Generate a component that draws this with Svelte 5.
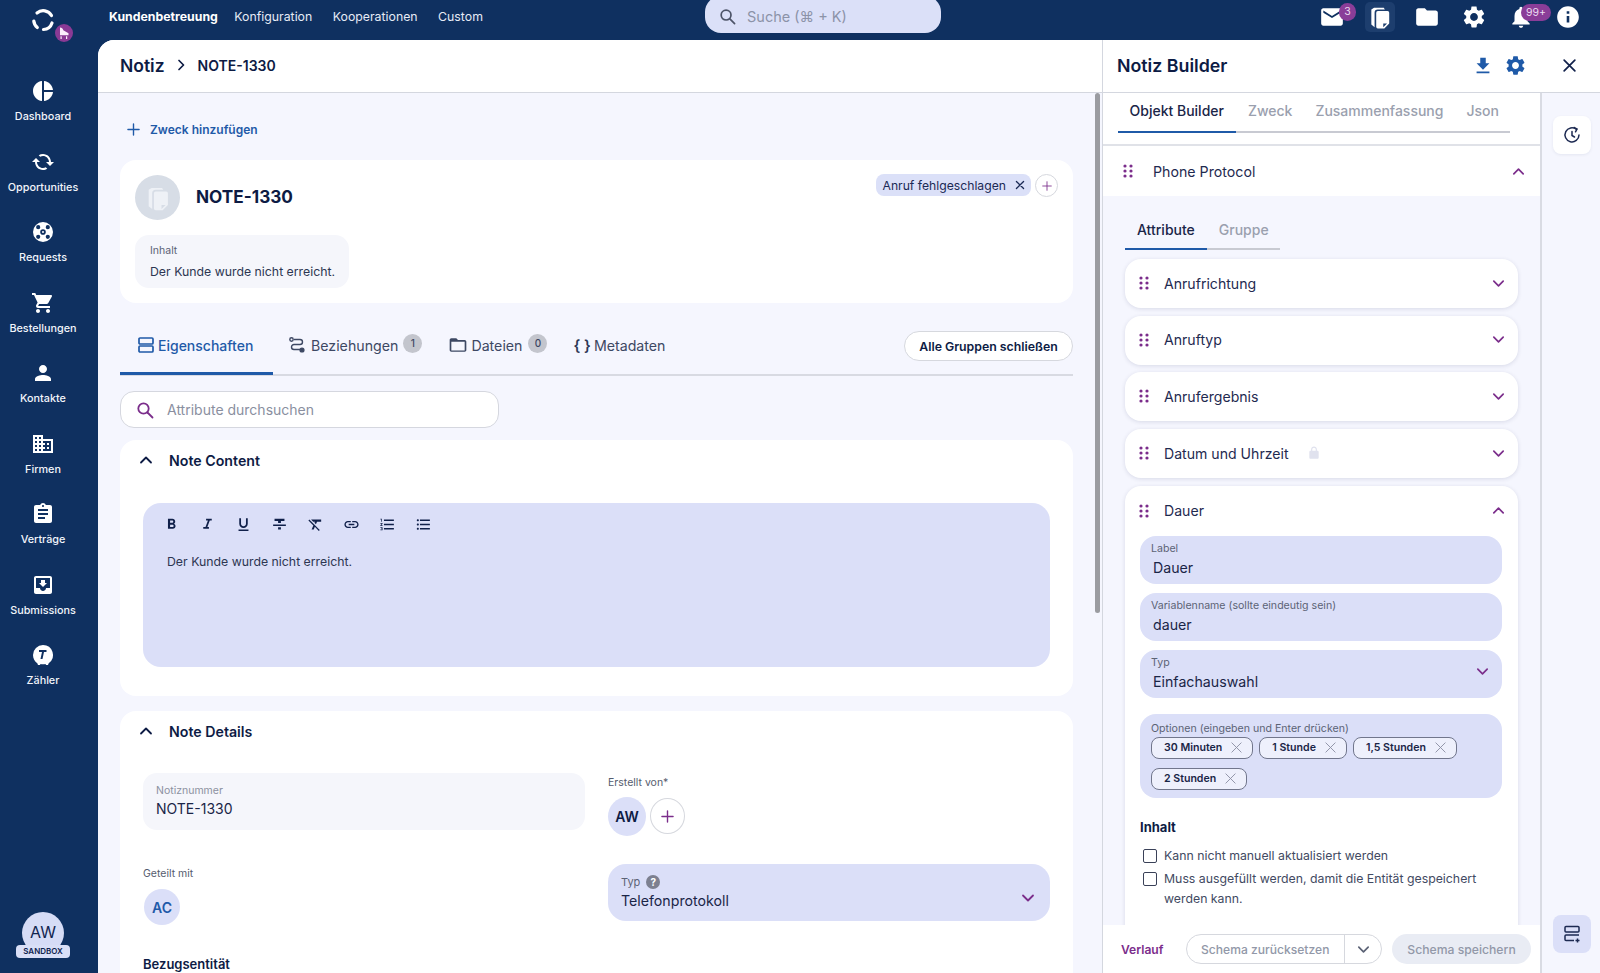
<script>
  const paths = {
    pie: "M11 2v20c-5-.5-9-4.8-9-10s4-9.5 9-10zm2 0v9h9c-.5-4.8-4.2-8.5-9-9zm0 11v9c4.8-.5 8.5-4.2 9-9h-9z",
    sync: "M12 4V1L8 5l4 4V6c3.31 0 6 2.69 6 6 0 1.01-.25 1.97-.7 2.8l1.46 1.46C19.54 15.03 20 13.57 20 12c0-4.42-3.58-8-8-8zm0 14c-3.31 0-6-2.69-6-6 0-1.01.25-1.97.7-2.8L5.24 7.74C4.46 8.97 4 10.43 4 12c0 4.42 3.58 8 8 8v3l4-4-4-4v3z",
    buoy: "M12 2a10 10 0 1 0 0 20 10 10 0 0 0 0-20zM9.2 12a2.8 2.8 0 1 0 5.6 0 2.8 2.8 0 1 0-5.6 0zM11 12a1 1 0 1 0 2 0 1 1 0 1 0-2 0zM5.1 7.2a2.1 2.1 0 1 0 4.2 0 2.1 2.1 0 1 0-4.2 0zM14.7 7.2a2.1 2.1 0 1 0 4.2 0 2.1 2.1 0 1 0-4.2 0zM5.1 16.8a2.1 2.1 0 1 0 4.2 0 2.1 2.1 0 1 0-4.2 0zM14.7 16.8a2.1 2.1 0 1 0 4.2 0 2.1 2.1 0 1 0-4.2 0z",
    cart: "M7 18c-1.1 0-1.99.9-1.99 2S5.9 22 7 22s2-.9 2-2-.9-2-2-2zM1 2v2h2l3.6 7.59-1.35 2.45c-.16.28-.25.61-.25.96 0 1.1.9 2 2 2h12v-2H7.42c-.14 0-.25-.11-.25-.25l.03-.12.9-1.63h7.45c.75 0 1.41-.41 1.75-1.03l3.58-6.49c.08-.14.12-.31.12-.48 0-.55-.45-1-1-1H5.21l-.94-2H1zm16 16c-1.1 0-1.99.9-1.99 2s.89 2 1.99 2 2-.9 2-2-.9-2-2-2z",
    person: "M12 12c2.21 0 4-1.79 4-4s-1.79-4-4-4-4 1.79-4 4 1.79 4 4 4zm0 2c-2.67 0-8 1.34-8 4v2h16v-2c0-2.66-5.33-4-8-4z",
    business: "M12 7V3H2v18h20V7H12zM6 19H4v-2h2v2zm0-4H4v-2h2v2zm0-4H4V9h2v2zm0-4H4V5h2v2zm4 12H8v-2h2v2zm0-4H8v-2h2v2zm0-4H8V9h2v2zm0-4H8V5h2v2zm10 12h-8v-2h2v-2h-2v-2h2v-2h-2V9h8v10zm-2-8h-2v2h2v-2zm0 4h-2v2h2v-2z",
    assign: "M19 3h-4.18C14.4 1.84 13.3 1 12 1c-1.3 0-2.4.84-2.82 2H5c-1.1 0-2 .9-2 2v14c0 1.1.9 2 2 2h14c1.1 0 2-.9 2-2V5c0-1.1-.9-2-2-2zm-7 0c.55 0 1 .45 1 1s-.45 1-1 1-1-.45-1-1 .45-1 1-1zm2 14H7v-2h7v2zm3-4H7v-2h10v2zm0-4H7V7h10v2z",
    inbox: "M19 3H5c-1.11 0-2 .9-2 2v14c0 1.1.89 2 2 2h14c1.1 0 2-.9 2-2V5c0-1.1-.9-2-2-2zm0 12h-4c0 1.66-1.35 3-3 3s-3-1.34-3-3H5V5h14v10zm-3-5h-2V7h-4v3H8l4 4 4-4z",
    meter: "M12 2a10 10 0 0 0-10 10c0 3.4 1.7 6.4 4.3 8.2L7 22h2l.5-1c.8.2 1.6.3 2.5.3s1.7-.1 2.5-.3l.5 1h2l.7-1.8A10 10 0 0 0 12 2zm3.5 7H13l-1.5 7h-2L11 9H8V7h7.5v2z",
    mail: "M20 4H4c-1.1 0-2 .9-2 2v12c0 1.1.9 2 2 2h16c1.1 0 2-.9 2-2V6c0-1.1-.9-2-2-2zm0 4l-8 5-8-5V6l8 5 8-5v2z",
    notes: "M6.5 3.5 4 5v14l3 2.5V8a3 3 0 0 1 3-3h6.5l-1-1.5zM10 6.5A1.5 1.5 0 0 0 8.5 8v13a1.5 1.5 0 0 0 1.5 1.5h6l4.5-4.5V8A1.5 1.5 0 0 0 19 6.5zm5 11.5h3.5L15 21.5z",
    folder: "M10 4H4c-1.1 0-1.99.9-1.99 2L2 18c0 1.1.9 2 2 2h16c1.1 0 2-.9 2-2V8c0-1.1-.9-2-2-2h-8l-2-2z",
    folderOutline: "M20 6h-8l-2-2H4c-1.1 0-2 .9-2 2v12c0 1.1.9 2 2 2h16c1.1 0 2-.9 2-2V8c0-1.1-.9-2-2-2zm0 12.5H4V8h16z",
    gear: "M19.14 12.94c.04-.3.06-.61.06-.94 0-.32-.02-.64-.07-.94l2.03-1.58c.18-.14.23-.41.12-.61l-1.92-3.32c-.12-.22-.37-.29-.59-.22l-2.39.96c-.5-.38-1.03-.7-1.62-.94l-.36-2.54c-.04-.24-.24-.41-.48-.41h-3.84c-.24 0-.43.17-.47.41l-.36 2.54c-.59.24-1.13.57-1.62.94l-2.39-.96c-.22-.08-.47 0-.59.22L2.74 8.87c-.12.21-.08.47.12.61l2.03 1.58c-.05.3-.09.63-.09.94s.02.64.07.94l-2.03 1.58c-.18.14-.23.41-.12.61l1.92 3.32c.12.22.37.29.59.22l2.39-.96c.5.38 1.03.7 1.62.94l.36 2.54c.05.24.24.41.48.41h3.84c.24 0 .44-.17.47-.41l.36-2.54c.59-.24 1.13-.56 1.62-.94l2.39.96c.22.08.47 0 .59-.22l1.92-3.32c.12-.22.07-.47-.12-.61l-2.01-1.58zM12 15.6c-1.98 0-3.6-1.62-3.6-3.6s1.62-3.6 3.6-3.6 3.6 1.62 3.6 3.6-1.62 3.6-3.6 3.6z",
    bell: "M12 22c1.1 0 2-.9 2-2h-4c0 1.1.89 2 2 2zm6-6v-5c0-3.07-1.64-5.64-4.5-6.32V4c0-.83-.67-1.5-1.5-1.5s-1.5.67-1.5 1.5v.68C7.63 5.36 6 7.92 6 11v5l-2 2v1h16v-1l-2-2z",
    info: "M12 2C6.48 2 2 6.48 2 12s4.48 10 10 10 10-4.48 10-10S17.52 2 12 2zm1.2 15h-2.4v-6h2.4v6zm0-8h-2.4V6.800h2.4V9z",
    download: "M19 9h-4V3H9v6H5l7 7 7-7zM5 18v2h14v-2H5z",
    bold: "M15.6 10.79c.97-.67 1.65-1.77 1.65-2.79 0-2.26-1.75-4-4-4H7v14h7.04c2.09 0 3.71-1.7 3.71-3.79 0-1.52-.86-2.82-2.15-3.42zM10 6.5h3c.83 0 1.5.67 1.5 1.5s-.67 1.5-1.5 1.5h-3v-3zm3.5 9H10v-3h3.5c.83 0 1.5.67 1.5 1.5s-.67 1.5-1.5 1.5z",
    italic: "M10 4v2.5h2.6L9.2 15.5H6V18h8v-2.5h-2.2l3.4-9H18V4z",
    underline: "M12 17c3.31 0 6-2.69 6-6V3h-2.5v8c0 1.93-1.57 3.5-3.5 3.5S8.5 12.93 8.5 11V3H6v8c0 3.31 2.69 6 6 6zm-7 2v2h14v-2H5z",
    strike: "M10 19h4v-3h-4v3zM5 4v3h5v3h4V7h5V4H5zM3 14h18v-2H3v2z",
    clear: "M3.27 5L2 6.27l6.97 6.97L6.5 19h3l1.57-3.66L16.73 21 18 19.73 3.55 5.27 3.27 5zM6 5v.18L8.82 8h2.4l-.72 1.68 2.1 2.1L14.21 8H20V5H6z",
    link: "M3.9 12c0-1.71 1.39-3.1 3.1-3.1h4V7H7c-2.76 0-5 2.24-5 5s2.24 5 5 5h4v-1.9H7c-1.71 0-3.1-1.39-3.1-3.1zM8 13h8v-2H8v2zm9-6h-4v1.9h4c1.71 0 3.1 1.39 3.1 3.1s-1.39 3.1-3.1 3.1h-4V17h4c2.76 0 5-2.24 5-5s-2.24-5-5-5z",
    ol: "M2 17h2v.5H3v1h1v.5H2v1h3v-4H2v1zm1-9h1V4H2v1h1v3zm-1 3h1.8L2 13.1v.9h3v-1H3.2L5 10.9V10H2v1zm5-6v2h14V5H7zm0 14h14v-2H7v2zm0-6h14v-2H7v2z",
    ul: "M4 10.5c-.83 0-1.5.67-1.5 1.5s.67 1.5 1.5 1.5 1.5-.67 1.5-1.5-.67-1.5-1.5-1.5zm0-6c-.83 0-1.5.67-1.5 1.5S3.17 7.5 4 7.5 5.5 6.83 5.5 6 4.83 4.5 4 4.5zm0 12c-.83 0-1.5.68-1.5 1.5s.68 1.5 1.5 1.5 1.5-.68 1.5-1.5-.67-1.5-1.5-1.5zM7 19h14v-2H7v2zm0-6h14v-2H7v2zm0-8v2h14V5H7z",
    lock: "M18 8h-1V6c0-2.76-2.24-5-5-5S7 3.24 7 6v2H6c-1.1 0-2 .9-2 2v10c0 1.1.9 2 2 2h12c1.1 0 2-.9 2-2V10c0-1.1-.9-2-2-2zM9 6c0-1.66 1.34-3 3-3s3 1.34 3 3v2H9V6z"
  };

  const navItems = [
    ["pie", "Dashboard"],
    ["sync", "Opportunities"],
    ["buoy", "Requests"],
    ["cart", "Bestellungen"],
    ["person", "Kontakte"],
    ["business", "Firmen"],
    ["assign", "Verträge"],
    ["inbox", "Submissions"],
    ["meter", "Zähler"]
  ];

  const toolbar = ["bold", "italic", "underline", "strike", "clear", "link", "ol", "ul"];
  const attributes = ["Anrufrichtung", "Anruftyp", "Anrufergebnis", "Datum und Uhrzeit"];
  const options = ["30 Minuten", "1 Stunde", "1,5 Stunden", "2 Stunden"];
</script>

{#snippet icon(name, size = 24)}
  <svg class="icon {name}" width={size} height={size} viewBox="0 0 24 24" fill="currentColor" fill-rule="evenodd"><path d={paths[name]} /></svg>
{/snippet}

{#snippet chevron(up = false, size = 16)}
  <svg class="icon chev" width={size} height={size} viewBox="0 0 16 16" fill="none" stroke="currentColor" stroke-width="1.8" stroke-linecap="round" stroke-linejoin="round">
    <path d={up ? "M3 10.5l5-5 5 5" : "M3 5.5l5 5 5-5"} />
  </svg>
{/snippet}

{#snippet cross(size = 14, width = 1.6)}
  <svg class="icon" width={size} height={size} viewBox="0 0 14 14" fill="none" stroke="currentColor" stroke-width={width} stroke-linecap="round">
    <path d="M2 2l10 10M12 2L2 12" />
  </svg>
{/snippet}

{#snippet plus(size = 14, width = 1.6)}
  <svg class="icon" width={size} height={size} viewBox="0 0 14 14" fill="none" stroke="currentColor" stroke-width={width} stroke-linecap="round">
    <path d="M7 1v12M1 7h12" />
  </svg>
{/snippet}

{#snippet grip()}
  <svg class="icon grip" width="10" height="14" viewBox="0 0 10 14" fill="currentColor">
    <circle cx="2" cy="2" r="1.6" /><circle cx="8" cy="2" r="1.6" />
    <circle cx="2" cy="7" r="1.6" /><circle cx="8" cy="7" r="1.6" />
    <circle cx="2" cy="12" r="1.6" /><circle cx="8" cy="12" r="1.6" />
  </svg>
{/snippet}

{#snippet searchGlass(size = 18)}
  <svg class="icon" width={size} height={size} viewBox="0 0 18 18" fill="none" stroke="currentColor" stroke-width="1.8" stroke-linecap="round">
    <circle cx="7.5" cy="7.5" r="5.2" /><path d="M11.5 11.5l5 5" />
  </svg>
{/snippet}

<div class="app">
  <aside class="sidebar">
    <div class="logo">
      <svg width="28" height="28" viewBox="0 0 28 28" fill="none" stroke="#fff" stroke-width="3.2" stroke-linecap="round">
        <path d="M4.8 15a9.5 9.5 0 0 0 3.500 6.500" />
        <path d="M8 7a9.500 9.500 0 0 1 14.500 2.500" />
        <path d="M23 17a9.500 9.500 0 0 1-8.500 6.500" />
      </svg>
      <span class="logo-badge">
        <svg width="14" height="14" viewBox="0 0 14 14" fill="#fbeffc"><path d="M3 1.500c1.800 0 2.800 1 3.300 2.800l5.200 3v2H3zM3.500 10.200h1.200V13H3.500zM9 10.200h1.200V13H9z" /></svg>
      </span>
    </div>
    <nav class="nav">
      {#each navItems as [name, label]}
        <div class="nav-item">
          {@render icon(name, 24)}
          <span>{label}</span>
        </div>
      {/each}
    </nav>
    <div class="user">
      <div class="user-circle">AW</div>
      <div class="sandbox">SANDBOX</div>
    </div>
  </aside>

  <div class="content">
    <header class="topbar">
      <div class="menu">
        <a class="strong" href="#top">Kundenbetreuung</a>
        <a href="#top">Konfiguration</a>
        <a href="#top">Kooperationen</a>
        <a href="#top">Custom</a>
      </div>
      <div class="global-search">
        {@render searchGlass(17)}
        <span>Suche (⌘ + K)</span>
      </div>
      <div class="top-icons">
        <span class="top-icon mail">{@render icon("mail", 26)}<b class="badge">3</b></span>
        <span class="top-icon tile">{@render icon("notes", 26)}</span>
        <span class="top-icon">{@render icon("folder", 26)}</span>
        <span class="top-icon">{@render icon("gear", 26)}</span>
        <span class="top-icon">{@render icon("bell", 26)}<b class="badge wide">99+</b></span>
        <span class="top-icon">{@render icon("info", 26)}</span>
      </div>
    </header>

    <div class="workspace">
      <main class="main">
        <div class="page-head">
          <h1>Notiz</h1>
          <svg class="crumb" width="10" height="12" viewBox="0 0 10 12" fill="none" stroke="currentColor" stroke-width="1.7" stroke-linecap="round" stroke-linejoin="round"><path d="M3 1.5 7.5 6 3 10.5" /></svg>
          <span>NOTE-1330</span>
        </div>
        <div class="scrollbar"></div>
        <div class="main-body">
          <div class="add-purpose">{@render plus(13, 1.5)}<span>Zweck hinzufügen</span></div>

          <section class="card summary">
            <div class="summary-head">
              <div class="note-avatar">{@render icon("notes", 28)}</div>
              <h2>NOTE-1330</h2>
              <div class="tag">Anruf fehlgeschlagen {@render cross(10, 1.8)}</div>
              <div class="round-plus small">{@render plus(10, 1.2)}</div>
            </div>
            <div class="inhalt">
              <small>Inhalt</small>
              <p>Der Kunde wurde nicht erreicht.</p>
            </div>
          </section>

          <div class="tabs">
            <div class="tab active">
              <svg width="18" height="18" viewBox="0 0 18 18" fill="none" stroke="currentColor" stroke-width="1.7"><rect x="2" y="2" width="14" height="6" rx="1" /><rect x="2" y="10" width="14" height="6" rx="1" /></svg>
              Eigenschaften
            </div>
            <div class="tab">
              <svg width="18" height="18" viewBox="0 0 18 18" fill="none" stroke="currentColor" stroke-width="1.4"><circle cx="3.5" cy="3.5" r="1.7" /><path d="M6 3.5h6a2.5 2.5 0 0 1 0 5H6a2.5 2.5 0 0 0 0 5h6" /><circle cx="14" cy="14" r="1.9" fill="currentColor" /></svg>
              Beziehungen <b class="count">1</b>
            </div>
            <div class="tab tight">
              {@render icon("folderOutline", 20)}
              Dateien <b class="count">0</b>
            </div>
            <div class="tab tight"><b class="braces">{"{ }"}</b> Metadaten</div>
            <button class="close-groups">Alle Gruppen schließen</button>
          </div>

          <div class="attr-search">
            {@render searchGlass(18)}
            <span>Attribute durchsuchen</span>
          </div>

          <section class="card content-card">
            <div class="card-head">{@render chevron(true, 16)}<h3>Note Content</h3></div>
            <div class="editor">
              <div class="toolbar">
                {#each toolbar as tool}
                  {@render icon(tool, 17)}
                {/each}
              </div>
              <p>Der Kunde wurde nicht erreicht.</p>
            </div>
          </section>

          <section class="card details-card">
            <div class="card-head">{@render chevron(true, 16)}<h3>Note Details</h3></div>
            <div class="details-grid">
              <div class="readonly">
                <small>Notiznummer</small>
                <span>NOTE-1330</span>
              </div>
              <div class="people first">
                <span class="people-label">Erstellt von*</span>
                <div class="people-row">
                  <div class="person-circle aw">AW</div>
                  <div class="round-plus">{@render plus(13, 1.5)}</div>
                </div>
              </div>
              <div class="people second">
                <span class="people-label">Geteilt mit</span>
                <div class="people-row"><div class="person-circle ac">AC</div></div>
              </div>
              <div class="type-select">
                <div>
                  <small>Typ <i class="help">?</i></small>
                  <span>Telefonprotokoll</span>
                </div>
                {@render chevron(false, 16)}
              </div>
            </div>
            <h4>Bezugsentität</h4>
          </section>
        </div>
      </main>

      <section class="builder">
        <div class="builder-head">
          <h2>Notiz Builder</h2>
          <span class="blue">{@render icon("download", 22)}</span>
          <span class="blue gear-btn">{@render icon("gear", 23)}</span>
          <span class="close">{@render cross(15, 1.6)}</span>
        </div>
        <div class="builder-body">
          <div class="builder-main">
            <div class="builder-scroll">
              <div class="builder-tabs">
                <span class="on">Objekt Builder</span>
                <span>Zweck</span>
                <span>Zusammenfassung</span>
                <span>Json</span>
              </div>
              <div class="protocol-row">
                {@render grip()}
                <span>Phone Protocol</span>
                {@render chevron(true, 15)}
              </div>
              <div class="protocol-body">
                <div class="sub-tabs">
                  <span class="on">Attribute</span>
                  <span>Gruppe</span>
                </div>
                {#each attributes as attr}
                  <div class="attr-card">
                    <div class="attr-row">
                      {@render grip()}
                      <span class="attr-name">{attr}</span>
                      {#if attr === "Datum und Uhrzeit"}
                        <span class="lock">{@render icon("lock", 14)}</span>
                      {/if}
                      {@render chevron(false, 15)}
                    </div>
                  </div>
                {/each}
                <div class="attr-card open">
                  <div class="attr-row">
                    {@render grip()}
                    <span class="attr-name">Dauer</span>
                    {@render chevron(true, 15)}
                  </div>
                  <div class="field"><small>Label</small><span>Dauer</span></div>
                  <div class="field"><small>Variablenname (sollte eindeutig sein)</small><span>dauer</span></div>
                  <div class="field with-arrow">
                    <div><small>Typ</small><span>Einfachauswahl</span></div>
                    {@render chevron(false, 15)}
                  </div>
                  <div class="field options">
                    <small>Optionen (eingeben und Enter drücken)</small>
                    <div class="chips">
                      {#each options as option}
                        <div class="chip">{option} {@render cross(13, 1)}</div>
                      {/each}
                    </div>
                  </div>
                  <h4>Inhalt</h4>
                  <div class="check"><i></i><span>Kann nicht manuell aktualisiert werden</span></div>
                  <div class="check"><i></i><span>Muss ausgefüllt werden, damit die Entität gespeichert werden kann.</span></div>
                </div>
              </div>
            </div>
            <footer class="builder-foot">
              <a href="#top">Verlauf</a>
              <div class="split">
                <span>Schema zurücksetzen</span>
                <span class="split-arrow">{@render chevron(false, 15)}</span>
              </div>
              <button class="save">Schema speichern</button>
            </footer>
          </div>
          <div class="rail">
            <div class="rail-btn">
              <svg width="18" height="18" viewBox="0 0 18 18" fill="none" stroke="currentColor" stroke-width="1.5" stroke-linecap="round"><path d="M13.5 3.5A7 7 0 1 0 16 9" /><path d="M9 5.5V9.5l2.500 1.500M11 1.500l3 1.500-1.500 2.800" /></svg>
            </div>
            <div class="rail-btn tinted">
              <svg width="20" height="20" viewBox="0 0 20 20" fill="none" stroke="currentColor" stroke-width="1.5"><rect x="3" y="2.5" width="14" height="5.5" rx="1" /><path d="M17 11H4a1 1 0 0 0-1 1v3.500a1 1 0 0 0 1 1h8M15.500 14.500v4M13.500 16.500h4" /></svg>
            </div>
          </div>
        </div>
      </section>
    </div>
  </div>
</div>

<style>
  :global(body) {
    margin: 0;
    background: #0f3060;
  }

  .app {
    display: flex;
    width: 1600px;
    height: 973px;
    overflow: hidden;
    background: #0f3060;
    font-family: Inter, "Noto Sans", sans-serif;
    color: #0d1b44;
  }

  .icon {
    display: block;
    flex: none;
  }

  h1, h2, h3, h4, p {
    margin: 0;
  }

  /* sidebar */
  .sidebar {
    width: 98px;
    flex: none;
    display: flex;
    flex-direction: column;
    color: #fff;
    padding-right: 12px;
    box-sizing: border-box;
  }

  .logo {
    height: 79px;
    position: relative;
    display: flex;
    justify-content: center;
    padding-top: 6px;
    box-sizing: border-box;
  }

  .logo-badge {
    position: absolute;
    left: 55px;
    top: 24px;
    width: 18px;
    height: 18px;
    border-radius: 50%;
    background: #8a3a95;
    display: flex;
    align-items: center;
    justify-content: center;
  }

  .nav {
    flex: 1;
  }

  .nav-item {
    height: 70.5px;
    display: flex;
    flex-direction: column;
    align-items: center;
  }

  .nav-item :global(.sync) {
    transform: scaleX(-1) rotate(-90deg);
  }

  .nav-item span {
    margin-top: 6px;
    font-size: 10.8px;
    line-height: 16px;
    font-weight: 500;
    color: #f2f5fb;
  }

  .user {
    display: flex;
    flex-direction: column;
    align-items: center;
    margin-bottom: 15px;
  }

  .user-circle {
    width: 42px;
    height: 42px;
    border-radius: 50%;
    background: #d6dcf6;
    color: #10244f;
    font-size: 16px;
    text-align: center;
    line-height: 40px;
  }

  .sandbox {
    margin-top: -9px;
    width: 54px;
    height: 13px;
    line-height: 13px;
    border-radius: 4px;
    background: #d9dff7;
    color: #10244f;
    font-size: 8px;
    font-weight: 600;
    text-align: center;
  }

  /* top bar */
  .content {
    flex: 1;
    min-width: 0;
    display: flex;
    flex-direction: column;
  }

  .topbar {
    height: 40px;
    flex: none;
    display: flex;
    align-items: center;
    overflow: hidden;
  }

  .menu {
    display: flex;
    padding-left: 11px;
    gap: 20.5px;
    font-size: 12.3px;
    width: 607px;
    height: 34px;
    flex: none;
    align-items: center;
    box-sizing: border-box;
    margin-top: -7px;
  }

  .menu a {
    color: #e6ebf6;
    text-decoration: none;
  }

  .menu a.strong {
    color: #fff;
    font-weight: 700;
    margin-right: -4px;
  }

  .global-search {
    width: 236px;
    height: 37px;
    flex: none;
    margin-top: -11px;
    box-sizing: border-box;
    padding: 4px 0 0 14px;
    border-radius: 16px;
    background: #dbe0f8;
    display: flex;
    align-items: center;
    gap: 11px;
    color: #4d5468;
    font-size: 14.5px;
  }

  .global-search span {
    color: #8c93a8;
  }

  .top-icons {
    flex: 1;
    display: flex;
    align-items: center;
    height: 40px;
    color: #fff;
    padding-left: 375px;
    gap: 17px;
  }

  .top-icon {
    position: relative;
    display: flex;
    align-items: center;
    justify-content: center;
    height: 30px;
    margin-top: -7px;
    width: 30px;
    flex: none;
  }

  .top-icon.mail {
    width: 32px;
  }

  .top-icon.tile {
    border-radius: 5px;
    background: #1d3e6e;
  }

  .badge {
    position: absolute;
    left: 23px;
    top: 1px;
    min-width: 17px;
    height: 18px;
    border-radius: 9px;
    background: #8a3d98;
    color: #eadcf0;
    font-size: 10.5px;
    font-weight: 400;
    line-height: 18px;
    text-align: center;
  }

  .badge.wide {
    left: 15px;
    top: 2px;
    min-width: 30px;
    height: 17px;
    line-height: 17px;
  }

  /* main column */
  .workspace {
    flex: 1;
    display: flex;
    min-height: 0;
  }

  .main {
    width: 1004px;
    flex: none;
    background: #f5f6fe;
    border-top-left-radius: 16px;
    display: flex;
    flex-direction: column;
    position: relative;
    overflow: hidden;
  }

  .page-head {
    height: 52px;
    flex: none;
    box-sizing: border-box;
    height: 53px;
    padding: 0 0 2px 22px;
    background: #fff;
    border-bottom: 1px solid #d4d7df;
    display: flex;
    align-items: center;
    font-size: 14px;
    font-weight: 600;
  }

  .page-head h1 {
    font-size: 17.5px;
    font-weight: 600;
  }

  .crumb {
    margin: 0 12px 0 11px;
  }

  .scrollbar {
    position: absolute;
    right: 2px;
    top: 53px;
    width: 5px;
    height: 520px;
    border-radius: 3px;
    background: #9b9ca1;
  }

  .main-body {
    padding: 24px 29px 0 22px;
  }

  .add-purpose {
    display: flex;
    align-items: center;
    height: 24px;
    padding-left: 7px;
    gap: 10px;
    color: #1f5aa8;
    font-size: 12px;
    font-weight: 600;
    margin-bottom: 19px;
  }

  .card {
    background: #fff;
    border-radius: 16px;
  }

  .summary {
    padding: 15px;
    height: 143px;
    box-sizing: border-box;
  }

  .summary-head {
    display: flex;
    height: 45px;
  }

  .note-avatar {
    width: 45px;
    height: 45px;
    border-radius: 50%;
    background: #d7dde6;
    color: #eef1f6;
    display: flex;
    align-items: center;
    justify-content: center;
  }

  .summary-head h2 {
    margin-left: 16px;
    flex: 1;
    font-size: 17.2px;
    line-height: 43px;
    font-weight: 700;
  }

  .tag {
    height: 22px;
    padding: 0 6px;
    display: flex;
    align-items: center;
    gap: 9px;
    border-radius: 8px;
    background: #dbe0f8;
    font-size: 12.2px;
    color: #1b2a55;
    margin-top: -1px;
  }

  .round-plus {
    width: 35px;
    height: 36px;
    margin-top: 1px;
    border-radius: 50%;
    border: 1px solid #d6d8de;
    background: #fff;
    color: #7b2d8b;
    display: flex;
    align-items: center;
    justify-content: center;
    box-sizing: border-box;
  }

  .round-plus.small {
    width: 23px;
    height: 23px;
    margin-left: 4px;
    margin-top: -1px;
  }

  .inhalt {
    margin-top: 15px;
    width: 214px;
    height: 53px;
    box-sizing: border-box;
    padding: 9px 15px;
    border-radius: 14px;
    background: #f5f6fb;
  }

  .inhalt small {
    display: block;
    font-size: 10.5px;
    line-height: 14px;
    color: #5c6375;
  }

  .inhalt p {
    margin-top: 6px;
    font-size: 12.3px;
    line-height: 16px;
    white-space: nowrap;
    color: #2d3652;
  }

  /* tabs */
  .tabs {
    margin-top: 28px;
    height: 45px;
    box-sizing: border-box;
    display: flex;
    align-items: flex-start;
    border-bottom: 2px solid #d8dae2;
    font-size: 14.2px;
    color: #3d4863;
  }

  .tab {
    display: flex;
    align-items: center;
    gap: 5px;
    height: 28px;
    margin-right: 26px;
  }

  .tab.tight {
    gap: 3px;
  }

  .tab.tight .count {
    margin-left: 3px;
  }

  .tab.active {
    width: 153px;
    height: 44px;
    padding: 1px 0 14px 17px;
    box-sizing: border-box;
    margin-right: 15px;
    gap: 3px;
    font-size: 14px;
    color: #1f5aa8;
    font-weight: 500;
    border-bottom: 3px solid #1f5aa8;
    flex: none;
  }

  .count {
    width: 19px;
    height: 19px;
    border-radius: 50%;
    background: #c3c5cd;
    font-size: 10px;
    line-height: 19px;
    font-weight: 500;
    text-align: center;
    color: #3d4863;
    margin-top: -3px;
  }

  .braces {
    font-weight: 600;
    font-size: 15px;
    color: #2c3655;
  }

  .close-groups {
    margin-left: auto;
    width: 169px;
    height: 30px;
    border: 1px solid #d6d8de;
    border-radius: 15px;
    background: #fff;
    color: #0d1b44;
    font: 600 12.3px Inter, sans-serif;
    padding: 0;
  }

  .attr-search {
    margin-top: 15px;
    width: 379px;
    height: 37px;
    box-sizing: border-box;
    padding-left: 15px;
    display: flex;
    align-items: center;
    gap: 13px;
    border: 1px solid #d5d7df;
    border-radius: 14px;
    background: #fff;
    color: #7b2d8b;
  }

  .attr-search span {
    color: #8a8f9f;
    font-size: 14px;
  }

  .card-head {
    height: 40px;
    display: flex;
    align-items: center;
    padding-left: 18px;
    gap: 15px;
    color: #0d1b44;
  }

  .card-head h3 {
    font-size: 14.2px;
    font-weight: 600;
  }

  .content-card {
    margin-top: 12px;
    height: 256px;
    padding: 0 23px;
    box-sizing: border-box;
  }

  .content-card .card-head {
    margin-left: -23px;
  }

  .editor {
    margin-top: 23px;
    height: 164px;
    border-radius: 18px;
    background: #dbdff8;
    padding: 13px 0 0 24px;
    box-sizing: border-box;
    font-size: 12.3px;
    color: #2d3652;
  }

  .toolbar {
    display: flex;
    gap: 19px;
    height: 18px;
    margin-left: -4px;
    color: #10204a;
  }

  .editor p {
    margin-top: 20px;
    line-height: 16px;
  }

  .details-card {
    margin-top: 15px;
    padding: 0 23px;
    height: 300px;
  }

  .details-card .card-head {
    margin-left: -23px;
  }

  .details-grid {
    margin-top: 22px;
    display: grid;
    grid-template-columns: 442px 442px;
    column-gap: 23px;
    row-gap: 28px;
    align-items: start;
  }

  .readonly {
    height: 57px;
    box-sizing: border-box;
    padding: 11px 13px;
    border-radius: 14px;
    background: #f5f6fb;
  }

  .readonly small, .type-select small {
    display: block;
    font-size: 10.5px;
    line-height: 14px;
    color: #8c91a0;
  }

  .readonly span {
    display: block;
    margin-top: 2px;
    font-size: 14px;
    line-height: 18px;
    color: #1a2547;
  }

  .people {
    padding-top: 3px;
  }

  .people-label {
    display: block;
    font-size: 10.5px;
    line-height: 14px;
    color: #555c6e;
  }

  .people-row {
    display: flex;
    gap: 4px;
    margin-top: 7px;
  }

  .people.second .people-row {
    margin-top: 8px;
    padding-left: 1px;
  }

  .person-circle {
    width: 38px;
    height: 39px;
    border-radius: 50%;
    background: #dbdff8;
    font-size: 14px;
    font-weight: 600;
    display: flex;
    align-items: center;
    justify-content: center;
  }

  .person-circle.ac {
    width: 36px;
    height: 36px;
    color: #1f5aa8;
  }

  .type-select {
    height: 57px;
    box-sizing: border-box;
    padding: 11px 14px 0 13px;
    display: flex;
    justify-content: space-between;
    align-items: center;
    border-radius: 18px;
    background: #dbdff8;
    color: #7b2d8b;
  }

  .type-select > div {
    flex: 1;
    align-self: flex-start;
  }

  .type-select small {
    display: flex;
    align-items: center;
    gap: 6px;
    color: #5c6375;
    font-size: 11px;
  }

  .type-select span {
    display: block;
    margin-top: 3px;
    font-size: 14.2px;
    line-height: 18px;
    color: #1a2547;
  }

  .help {
    width: 14px;
    height: 14px;
    border-radius: 50%;
    background: #7d8090;
    color: #fff;
    font: 700 10px/14px Inter, sans-serif;
    text-align: center;
  }

  .details-card h4 {
    margin-top: 31px;
    font-size: 13px;
    line-height: 16px;
    font-weight: 600;
  }

  /* builder */
  .builder {
    flex: 1;
    min-width: 0;
    display: flex;
    flex-direction: column;
    background: #f5f6fe;
    border-left: 1px solid #d4d7df;
    box-sizing: border-box;
  }

  .builder-head {
    height: 53px;
    box-sizing: border-box;
    flex: none;
    background: #fff;
    border-bottom: 1px solid #d4d7df;
    display: flex;
    align-items: center;
    padding: 0 23px 1px 14px;
    color: #1f5aa8;
  }

  .builder-head h2 {
    flex: 1;
    font-size: 17.8px;
    font-weight: 600;
    color: #0d1b44;
  }

  .gear-btn {
    margin: 0 35px 0 10px;
  }

  .close {
    color: #10204a;
  }

  .builder-body {
    flex: 1;
    min-height: 0;
    display: flex;
  }

  .builder-main {
    width: 439px;
    flex: none;
    box-sizing: border-box;
    border-right: 2px solid #d9dbe3;
    display: flex;
    flex-direction: column;
    background: #fff;
  }

  .builder-scroll {
    flex: 1;
    min-height: 0;
    overflow: hidden;
  }

  .builder-tabs {
    height: 53px;
    border-bottom: 2px solid #e0e2e8;
    display: flex;
    padding: 0 15px;
    box-sizing: border-box;
    font-size: 14px;
    font-weight: 500;
    color: #9aa0ae;
  }

  .builder-tabs span {
    height: 40px;
    line-height: 36px;
    box-sizing: border-box;
    padding: 0 11.5px;
    border-bottom: 2px solid #c8cad2;
    white-space: nowrap;
  }

  .builder-tabs span.on {
    padding-right: 12.5px;
    color: #1a2547;
    border-bottom-color: #1f5aa8;
  }

  .protocol-row {
    height: 50px;
    display: flex;
    align-items: center;
    padding: 0 14px 0 20px;
    font-size: 14.2px;
    color: #1f2a50;
  }

  .protocol-row span {
    flex: 1;
    margin-left: 20px;
  }

  .grip {
    color: #7b2d8b;
  }

  .protocol-row > :global(.chev), .attr-row > :global(.chev), .with-arrow > :global(.chev) {
    color: #7b2d8b;
  }

  .protocol-body {
    background: #f5f6fe;
    padding: 20px 22px 0 22px;
    min-height: 800px;
  }

  .sub-tabs {
    display: flex;
    width: 155px;
    height: 34px;
    box-sizing: border-box;
    border-bottom: 2px solid #c8cad2;
    font-size: 14px;
    font-weight: 500;
    color: #9aa0ae;
    margin-bottom: 9px;
  }

  .sub-tabs span {
    padding: 5px 12px 0;
    height: 34px;
    box-sizing: border-box;
  }

  .sub-tabs .on {
    color: #1a2547;
    border-bottom: 2px solid #1f5aa8;
  }

  .attr-card {
    background: #fff;
    border-radius: 16px;
    box-shadow: 0 1px 4px rgba(40, 50, 90, 0.14);
    margin-bottom: 7.7px;
  }

  .attr-row {
    height: 48px;
    display: flex;
    align-items: center;
    padding: 0 12px 1px 14px;
    font-size: 14.1px;
    color: #1f2a50;
    box-sizing: content-box;
  }

  .attr-name {
    margin-left: 15px;
  }

  .lock {
    margin-left: 9px;
    color: #e0e2ee;
  }

  .attr-row > :global(.chev) {
    margin-left: auto;
  }

  .attr-card.open {
    padding: 0 16px 30px 15px;
  }

  .open .attr-row {
    padding: 0;
    height: 50px;
  }

  .open .attr-row > :global(.grip) {
    margin-left: -1px;
  }

  .open .attr-row > :global(.chev) {
    margin-right: -4px;
  }

  .field {
    display: block;
    min-height: 48px;
    box-sizing: border-box;
    border-radius: 16px;
    background: #dbdff8;
    padding: 6px 11px 0;
    margin-bottom: 9px;
  }

  .field small {
    display: block;
    font-size: 10.6px;
    line-height: 14px;
    color: #5c6375;
  }

  .field span {
    display: block;
    font-size: 14.2px;
    line-height: 20px;
    margin: 2px 0 0 2px;
    color: #1a2547;
  }

  .with-arrow {
    display: flex;
    align-items: center;
    justify-content: space-between;
    padding-right: 12px;
  }

  .with-arrow > div {
    align-self: flex-start;
  }

  .with-arrow > :global(.chev) {
    margin-bottom: 10px;
  }

  .options {
    margin-top: 16px;
    height: 84px;
    padding-top: 8px;
  }

  .chips {
    display: flex;
    flex-wrap: wrap;
    gap: 9px 6px;
    margin-top: 1px;
  }

  .chip {
    height: 22px;
    box-sizing: border-box;
    display: flex;
    align-items: center;
    padding: 0 9px 0 12px;
    gap: 8px;
    border: 1px solid #71768c;
    border-radius: 8px;
    background: #eef0fc;
    font-size: 10.6px;
    font-weight: 600;
    color: #1a2547;
  }

  .chip :global(svg) {
    color: #8c90a4;
  }

  .open h4 {
    margin: 21px 0 11px;
    font-size: 13px;
    font-weight: 700;
  }

  .check {
    display: flex;
    gap: 7px;
    padding-left: 3px;
    margin-bottom: 3px;
    font-size: 12.3px;
    line-height: 20px;
    color: #424a62;
  }

  .check i {
    width: 14px;
    height: 14px;
    box-sizing: border-box;
    flex: none;
    margin-top: 3px;
    border: 1.5px solid #3a4158;
    border-radius: 2px;
  }

  .builder-foot {
    height: 48px;
    flex: none;
    background: #fff;
    display: flex;
    align-items: center;
    padding-left: 18px;
    font-size: 12.1px;
    font-weight: 500;
  }

  .builder-foot a {
    color: #7b2d8b;
    text-decoration: none;
    font-weight: 600;
    width: 65px;
  }

  .split {
    width: 196px;
    height: 30px;
    box-sizing: border-box;
    display: flex;
    align-items: center;
    border: 1px solid #d6d8de;
    border-radius: 15px;
    color: #9298a8;
    padding-left: 14px;
  }

  .split > span:first-child {
    flex: 1;
  }

  .split-arrow {
    width: 36px;
    height: 28px;
    display: flex;
    align-items: center;
    justify-content: center;
    border-left: 1px solid #d6d8de;
    color: #5b6275;
  }

  .save {
    margin-left: 10px;
    width: 139px;
    height: 30px;
    border: 0;
    border-radius: 15px;
    background: #e9ecf4;
    color: #9298a8;
    font: 500 12.2px Inter, sans-serif;
    padding: 0;
  }

  .rail {
    flex: 1;
    padding: 23px 10px 20px 11px;
    display: flex;
    flex-direction: column;
    justify-content: space-between;
  }

  .rail-btn {
    width: 38px;
    height: 38px;
    border-radius: 8px;
    background: #fff;
    display: flex;
    align-items: center;
    justify-content: center;
    color: #1d2a52;
    box-shadow: 0 1px 3px rgba(40, 50, 90, 0.08);
  }

  .rail-btn.tinted {
    background: #dbdff8;
    box-shadow: none;
  }
</style>
